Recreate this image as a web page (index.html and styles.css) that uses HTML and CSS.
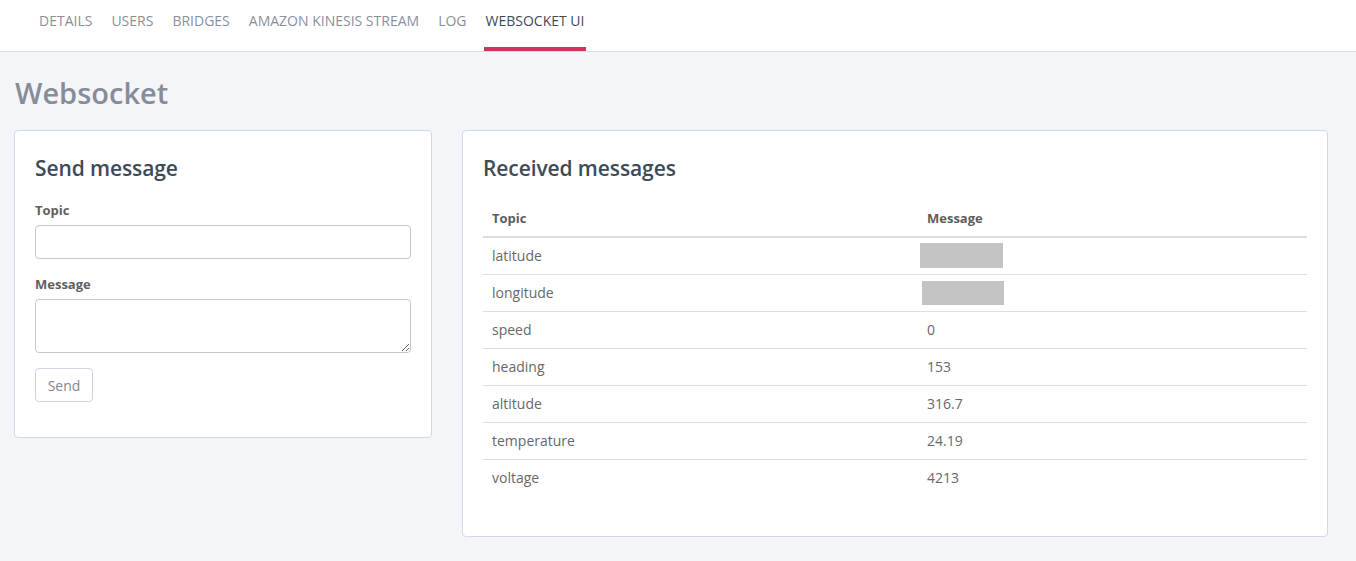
FILE: index.html
```html
<!DOCTYPE html>
<html>
<head>
<meta charset="utf-8">
<link rel="stylesheet" href="styles.css">
</head>
<body>
<nav class="tabs">
  <a class="tab">DETAILS</a>
  <a class="tab">USERS</a>
  <a class="tab">BRIDGES</a>
  <a class="tab">AMAZON KINESIS STREAM</a>
  <a class="tab">LOG</a>
  <a class="tab active">WEBSOCKET UI</a>
</nav>
<main class="page">
  <h1 class="page-title">Websocket</h1>
  <div class="columns">
    <section class="card send-card">
      <h2 class="card-title">Send message</h2>
      <div class="field">
        <label class="label">Topic</label>
        <input class="input" type="text">
      </div>
      <div class="field">
        <label class="label">Message</label>
        <textarea class="input textarea"></textarea>
      </div>
      <button class="btn">Send</button>
    </section>
    <section class="card recv-card">
      <h2 class="card-title">Received messages</h2>
      <table class="table">
        <thead>
          <tr><th class="col-topic">Topic</th><th>Message</th></tr>
        </thead>
        <tbody>
          <tr><td>latitude</td><td><span class="redact"></span></td></tr>
          <tr><td>longitude</td><td><span class="redact redact-2"></span></td></tr>
          <tr><td>speed</td><td>0</td></tr>
          <tr><td>heading</td><td>153</td></tr>
          <tr><td>altitude</td><td>316.7</td></tr>
          <tr><td>temperature</td><td>24.19</td></tr>
          <tr><td>voltage</td><td>4213</td></tr>
        </tbody>
      </table>
    </section>
  </div>
</main>
</body>
</html>
```

FILE: styles.css
```css
* { box-sizing: border-box; }
html, body { margin: 0; padding: 0; }
body {
  background: #f4f5f9;
  font-family: "Open Sans", "DejaVu Sans", sans-serif;
  color: #666;
  height: 561px;
  overflow: hidden;
}
.tabs {
  background: #fff;
  height: 52px;
  border-bottom: 1px solid #d9dce3;
  display: flex;
  align-items: stretch;
  padding-left: 37px;
}
.tab {
  display: flex;
  align-items: flex-start;
  padding: 11px 2px 0;
  margin-right: 15px;
  font-size: 14px;
  font-weight: 500;
  color: #8a8f9d;
  border-bottom: 4px solid transparent;
  letter-spacing: 0;
}
.tab.active {
  color: #3f4a59;
  border-bottom-color: #c9375c;
}
.page {
  padding: 0 14px;
}
.page-title {
  margin: 0;
  padding-top: 22px;
  font-size: 29px;
  line-height: 38px;
  font-weight: 600;
  color: #878c98;
  padding-left: 1px;
  letter-spacing: 0;
  height: 78px;
}
.columns {
  display: grid;
  grid-template-columns: 418px 866px;
  column-gap: 30px;
  align-items: start;
}
.card {
  background: #fff;
  border: 1px solid #d3d8e6;
  border-radius: 4px;
  padding: 20px;
}
.card-title {
  margin: 0 0 15px;
  font-size: 21px;
  line-height: 34px;
  font-weight: 600;
  color: #3d4a57;
  letter-spacing: -0.1px;
}
.send-card { padding-bottom: 35px; }
.field { margin-bottom: 15px; }
.label {
  display: block;
  font-size: 13px;
  font-weight: 700;
  color: #5f5f5f;
  line-height: 20px;
  margin-bottom: 5px;
}
.input {
  display: block;
  width: 100%;
  height: 34px;
  border: 1px solid #c6c6c6;
  border-radius: 4px;
  background: #fff;
  font: inherit;
  margin: 0;
}
.textarea {
  height: 54px;
  resize: vertical;
}
.btn {
  display: block;
  height: 34px;
  width: 58px;
  background: #fff;
  border: 1px solid #cfd5e4;
  border-radius: 4px;
  font-family: inherit;
  font-size: 14px;
  color: #7f8691;
  padding: 0;
  margin-top: 0;
}
.recv-card {
  padding-bottom: 40px;
}
.table {
  width: 100%;
  border-collapse: collapse;
  font-size: 14px;
  margin-top: 0;
}
.table th {
  text-align: left;
  font-size: 13px;
  font-weight: 700;
  color: #5d5d5d;
  padding: 7px 9px 8px;
  height: 37px;
  border-bottom: 2px solid #dcdcdc;
}
.col-topic { width: 435px; }
.table td {
  padding: 0 9px;
  height: 37px;
  color: #686868;
  border-top: 1px solid #dedede;
  vertical-align: middle;
}
.table tbody tr:first-child td { border-top: none; }
.redact {
  display: block;
  width: 83px;
  height: 25px;
  background: #c3c3c3;
  margin-left: -7px;
}
.redact-2 { width: 82px; height: 24px; margin-left: -5px; }
```
